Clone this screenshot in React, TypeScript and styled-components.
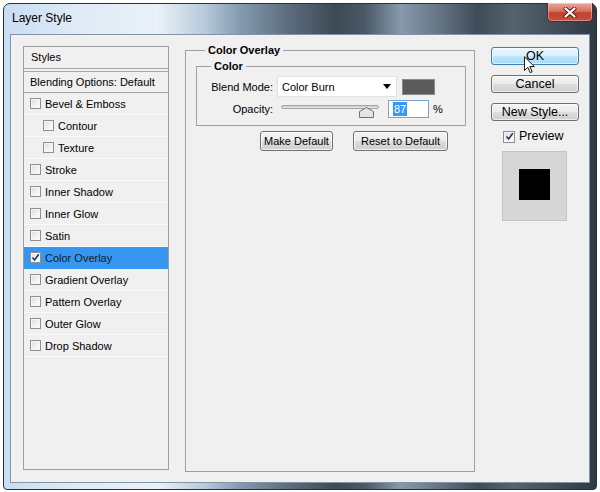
import React from 'react';
import styled, {createGlobalStyle} from 'styled-components';

type Effect = {label: string; sub?: boolean; checked?: boolean; active?: boolean};

const effects: Effect[] = [
  {label: 'Bevel & Emboss'},
  {label: 'Contour', sub: true},
  {label: 'Texture', sub: true},
  {label: 'Stroke'},
  {label: 'Inner Shadow'},
  {label: 'Inner Glow'},
  {label: 'Satin'},
  {label: 'Color Overlay', checked: true, active: true},
  {label: 'Gradient Overlay'},
  {label: 'Pattern Overlay'},
  {label: 'Outer Glow'},
  {label: 'Drop Shadow'},
];

const CheckMark = () => (
  <svg width="9" height="9" viewBox="0 0 9 9">
    <path d="M1.5 4.5 L3.6 7 L7.8 1.2" fill="none" stroke="#1e395b" strokeWidth="1.6" />
  </svg>
);

const Checkbox: React.FC<{checked?: boolean}> = ({checked}) => (
  <Box>{checked && <CheckMark />}</Box>
);

export default function App() {
  return (
    <>
      <GlobalStyle />
      <Page>
        <Window>
          <TitleBar>
            <Title>Layer Style</Title>
            <CloseButton>
              <svg width="14" height="11" viewBox="0 0 14 11">
                <path d="M2.5 1.5 L11.5 9.5 M11.5 1.5 L2.5 9.5" stroke="#5a1a14" strokeWidth="4" strokeLinecap="round" />
                <path d="M2.5 1.5 L11.5 9.5 M11.5 1.5 L2.5 9.5" stroke="#fff" strokeWidth="2.2" strokeLinecap="round" />
              </svg>
            </CloseButton>
          </TitleBar>

          <Client>
            <StylesPanel>
              <HeaderRow>Styles</HeaderRow>
              <BlendRow>Blending Options: Default</BlendRow>
              {effects.map(e => (
                <EffectRow key={e.label} $sub={e.sub} $active={e.active}>
                  <Checkbox checked={e.checked} />
                  <span>{e.label}</span>
                </EffectRow>
              ))}
            </StylesPanel>

            <Group>
              <GroupLegend>Color Overlay</GroupLegend>
              <GroupBody>
                <InnerGroup>
                  <InnerLegend>Color</InnerLegend>
                  <FormGrid>
                    <FieldLabel>Blend Mode:</FieldLabel>
                    <FieldLine>
                      <Select>
                        <span>Color Burn</span>
                        <svg width="8" height="5" viewBox="0 0 8 5">
                          <path d="M0 0 H8 L4 5 Z" fill="#000" />
                        </svg>
                      </Select>
                      <Swatch />
                    </FieldLine>
                    <FieldLabel>Opacity:</FieldLabel>
                    <FieldLine>
                      <Slider>
                        <Track />
                        <Thumb width="15" height="11" viewBox="0 0 15 11">
                          <path
                            d="M0.5 4.5 L7.5 0.5 L14.5 4.5 L14.5 10.5 L0.5 10.5 Z"
                            fill="#e4e4e4"
                            stroke="#6f6f6f"
                          />
                        </Thumb>
                      </Slider>
                      <NumberInput>
                        <Selected>87</Selected>
                      </NumberInput>
                      <Unit>%</Unit>
                    </FieldLine>
                  </FormGrid>
                </InnerGroup>
                <ButtonRow>
                  <SmallButton $w={73}>Make Default</SmallButton>
                  <SmallButton $w={95}>Reset to Default</SmallButton>
                </ButtonRow>
              </GroupBody>
            </Group>

            <SideColumn>
              <DialogButton $primary>OK</DialogButton>
              <DialogButton>Cancel</DialogButton>
              <DialogButton>New Style...</DialogButton>
              <PreviewToggle>
                <Checkbox checked />
                <span>Preview</span>
              </PreviewToggle>
              <PreviewBox>
                <PreviewSquare />
              </PreviewBox>
            </SideColumn>
          </Client>
        </Window>

        <Cursor width="11" height="18" viewBox="0 0 12 19">
          <path
            d="M0.5 0.5 L0.5 15.5 L4.2 12 L6.8 17.8 L8.9 16.9 L6.4 11.2 L11.3 11.2 Z"
            fill="#fff"
            stroke="#000"
            strokeWidth="1"
            strokeLinejoin="round"
          />
        </Cursor>
      </Page>
    </>
  );
}

const GlobalStyle = createGlobalStyle`
  html, body {
    margin: 0;
    padding: 0;
    background: #fff;
  }
  body {
    font-family: "Liberation Sans", Arial, sans-serif;
    font-size: 11px;
    color: #000;
  }
`;

const Page = styled.div`
  position: relative;
  width: 600px;
  height: 492px;
  padding: 3px;
  box-sizing: border-box;
`;

const Window = styled.div`
  width: 594px;
  height: 487px;
  box-sizing: border-box;
  border: 1px solid #25303b;
  border-radius: 7px 7px 4px 4px;
  padding: 0 6px 6px 6px;
  display: flex;
  flex-direction: column;
  background: linear-gradient(
    90deg,
    #c8def2 0%,
    #dfeaf5 12%,
    #eaf1f8 26%,
    #b7c9db 34%,
    #8399ae 40%,
    #5d6d7e 48%,
    #3d4955 56%,
    #4b5967 61%,
    #8799ab 67%,
    #6e7e8f 72%,
    #3f4b58 80%,
    #55636f 86%,
    #2f3944 100%
  );
`;

const TitleBar = styled.div`
  height: 30px;
  display: flex;
  justify-content: space-between;
  align-items: flex-start;
`;

const Title = styled.div`
  margin: 7px 0 0 2px;
  font-size: 12px;
  line-height: 14px;
  color: #000;
`;

const CloseButton = styled.div`
  width: 46px;
  height: 19px;
  margin: -1px -3px 0 0;
  box-sizing: border-box;
  border: 1px solid #5c2520;
  border-top: none;
  border-radius: 0 0 5px 5px;
  display: flex;
  align-items: center;
  justify-content: center;
  background: linear-gradient(180deg, #e9a99f 0%, #d7705f 45%, #c2402f 55%, #c8503d 100%);
  box-shadow: inset 0 0 0 1px rgba(255, 255, 255, 0.35);
`;

const Client = styled.div`
  flex: 1;
  border: 1px solid #8394a6;
  background: #f0f0f0;
  padding: 11px 10px 0 12px;
  display: flex;
  gap: 16px;
  align-items: flex-start;
`;

const StylesPanel = styled.div`
  width: 146px;
  height: 424px;
  box-sizing: border-box;
  border: 1px solid #a0a0a0;
  display: flex;
  flex-direction: column;
`;

const HeaderRow = styled.div`
  height: 21px;
  line-height: 21px;
  padding-left: 7px;
  border-bottom: 1px solid #a5a5a5;
`;

const BlendRow = styled.div`
  height: 20px;
  line-height: 20px;
  margin-top: 2px;
  padding-left: 6px;
  border-top: 1px solid #a5a5a5;
  border-bottom: 1px solid #a5a5a5;
`;

const EffectRow = styled.div<{$sub?: boolean; $active?: boolean}>`
  height: 21px;
  display: flex;
  align-items: center;
  gap: 4px;
  padding-left: ${p => (p.$sub ? 19 : 6)}px;
  border-bottom: 1px solid ${p => (p.$active ? '#3797f0' : '#fbfbfb')};
  background: ${p => (p.$active ? '#3797f0' : 'transparent')};
  color: ${p => (p.$active ? '#0d1a2a' : '#000')};
`;

const Box = styled.div`
  width: 11px;
  height: 11px;
  box-sizing: border-box;
  border: 1px solid #8e8f8f;
  background: linear-gradient(135deg, #dadada 0%, #f4f4f4 60%, #ffffff 100%);
  box-shadow: inset 0 0 0 1px #f6f6f6;
  display: flex;
  align-items: center;
  justify-content: center;
  flex: none;
`;

const Group = styled.fieldset`
  margin: -2px 0 0 0;
  padding: 0;
  width: 290px;
  height: 428px;
  box-sizing: border-box;
  border: 1px solid #a0a0a0;
  min-inline-size: 0;
`;

const GroupLegend = styled.legend`
  margin-left: 19px;
  padding: 0 3px;
  font-weight: bold;
  line-height: 13px;
`;

const GroupBody = styled.div`
  padding: 3px 8px 0 10px;
`;

const InnerGroup = styled.fieldset`
  margin: 0;
  padding: 3px 0 7px 0;
  border: 1px solid #a0a0a0;
  min-inline-size: 0;
`;

const InnerLegend = styled.legend`
  margin-left: 14px;
  padding: 0 3px;
  font-weight: bold;
  line-height: 13px;
`;

const FormGrid = styled.div`
  display: grid;
  grid-template-columns: 76px 1fr;
  column-gap: 4px;
  row-gap: 3px;
  align-items: center;
`;

const FieldLabel = styled.div`
  text-align: right;
`;

const FieldLine = styled.div`
  display: flex;
  align-items: center;
`;

const Select = styled.div`
  width: 120px;
  height: 21px;
  box-sizing: border-box;
  background: #fff;
  border: 1px solid #e2e2e2;
  display: flex;
  align-items: center;
  justify-content: space-between;
  padding: 0 5px 0 4px;
`;

const Swatch = styled.div`
  width: 33px;
  height: 16px;
  margin-left: 5px;
  box-sizing: border-box;
  background: #5b5b5b;
  border: 1px solid #8a8a8a;
`;

const Slider = styled.div`
  position: relative;
  width: 107px;
  height: 18px;
`;

const Track = styled.div`
  position: absolute;
  left: 4px;
  top: 5px;
  width: 98px;
  height: 4px;
  box-sizing: border-box;
  border: 1px solid #a5a5a5;
  border-radius: 2px;
  background: linear-gradient(180deg, #c9c9c9, #ececec);
`;

const Thumb = styled.svg`
  position: absolute;
  left: 82px;
  top: 7px;
`;

const NumberInput = styled.div`
  width: 41px;
  height: 18px;
  margin-left: 4px;
  box-sizing: border-box;
  border: 1px solid #7da2c9;
  background: #fff;
  padding: 1px 0 1px 4px;
  display: flex;
`;

const Selected = styled.span`
  background: #3399ff;
  color: #fff;
  line-height: 14px;
  padding: 0 1px;
`;

const Unit = styled.span`
  margin-left: 4px;
`;

const ButtonRow = styled.div`
  display: flex;
  justify-content: flex-end;
  gap: 20px;
  margin-top: 5px;
  padding-right: 18px;
`;

const SmallButton = styled.div<{$w: number}>`
  width: ${p => p.$w}px;
  height: 20px;
  box-sizing: border-box;
  border: 1px solid #707070;
  border-radius: 3px;
  background: linear-gradient(180deg, #f4f4f4 0%, #ebebeb 50%, #dddddd 51%, #cfcfcf 100%);
  box-shadow: inset 0 0 0 1px rgba(255, 255, 255, 0.7);
  display: flex;
  align-items: center;
  justify-content: center;
`;

const SideColumn = styled.div`
  width: 88px;
  margin-top: 1px;
  display: flex;
  flex-direction: column;
  gap: 10px;
`;

const DialogButton = styled.div<{$primary?: boolean}>`
  height: 18px;
  box-sizing: border-box;
  border: 1px solid ${p => (p.$primary ? '#3c7fb1' : '#707070')};
  border-radius: 3px;
  background: ${p =>
    p.$primary
      ? 'linear-gradient(180deg, #eaf6fd 0%, #d9f0fc 50%, #bee6fd 51%, #a7d9f5 100%)'
      : 'linear-gradient(180deg, #f4f4f4 0%, #ebebeb 50%, #dddddd 51%, #cfcfcf 100%)'};
  box-shadow: inset 0 0 0 1px rgba(255, 255, 255, 0.6);
  display: flex;
  align-items: center;
  justify-content: center;
  font-size: 12.5px;
  line-height: 16px;
`;

const PreviewToggle = styled.div`
  display: flex;
  align-items: center;
  gap: 4px;
  padding-left: 12px;
  margin-top: -1px;
  font-size: 12.5px;
  line-height: 13px;
  ${Box} {
    width: 12px;
    height: 12px;
  }
`;

const PreviewBox = styled.div`
  width: 65px;
  height: 70px;
  margin: -2px 0 0 11px;
  box-sizing: border-box;
  border: 1px solid #c4c4c4;
  background: #d6d6d6;
  display: flex;
  align-items: center;
  justify-content: center;
  padding-bottom: 4px;
`;

const PreviewSquare = styled.div`
  width: 31px;
  height: 31px;
  background: #000;
`;

const Cursor = styled.svg`
  position: absolute;
  left: 524px;
  top: 56px;
`;
